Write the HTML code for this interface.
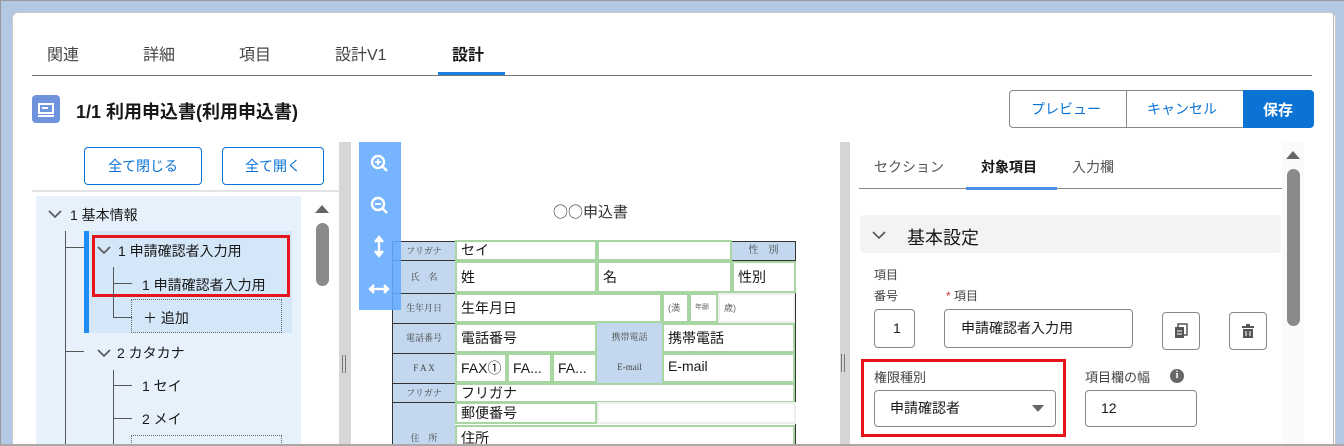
<!DOCTYPE html>
<html style="width:1344px;height:446px;overflow:hidden"><head><meta charset="utf-8"><style>
*{box-sizing:border-box;margin:0;padding:0}
body{width:1344px;height:446px;overflow:hidden;background:#b3c8e4;font-family:"Liberation Sans","Noto Sans CJK JP",sans-serif;color:#181818;position:relative}
.a{position:absolute}
.card{left:12px;top:12px;width:1324px;height:434px;background:#fff;border-radius:6px 6px 0 0;border:1px solid #c9c9c9;border-bottom:none}
.t{position:absolute;white-space:nowrap}
.btn{position:absolute;border:1px solid #0b73d4;border-radius:4px;color:#0b73d4;font-size:14px;text-align:center;background:#fff}
.g{position:absolute;background:#fff;border:2px solid #a8d6a2;font-size:14px;padding-left:4px;white-space:nowrap;overflow:hidden}
.lb{position:absolute;background:#c3d8ef;font-family:"Liberation Serif","Noto Serif CJK SC",serif;font-size:9px;color:#444;text-align:center;white-space:nowrap;border-bottom:1px solid #333}
.hl{position:absolute;background:#555;height:1px}
.vl{position:absolute;background:#555;width:1px}
.inp{position:absolute;border:1px solid #888;border-radius:4px;background:#fff;font-size:14px}
</style></head><body>
<div class="a" style="left:0;top:0;width:1344px;height:1px;background:#999"></div>
<div class="a" style="left:0;top:0;width:1px;height:446px;background:#999"></div>
<div class="a card"></div>
<!-- tabs -->
<div class="t" style="left:47px;top:41px;font-size:16px;color:#444">関連</div>
<div class="t" style="left:143px;top:41px;font-size:16px;color:#444">詳細</div>
<div class="t" style="left:239px;top:41px;font-size:16px;color:#444">項目</div>
<div class="t" style="left:335px;top:41px;font-size:16px;color:#444">設計V1</div>
<div class="t" style="left:452px;top:41px;font-size:16px;font-weight:bold">設計</div>
<div class="a" style="left:32px;top:75px;width:1280px;height:1px;background:#777"></div>
<div class="a" style="left:438px;top:72px;width:67px;height:3px;background:#1b7de0"></div>
<!-- header -->
<div class="a" style="left:32px;top:95px;width:28px;height:28px;background:#6f93dc;border-radius:4px"></div>
<svg class="a" style="left:32px;top:95px" width="28" height="28"><rect x="7" y="9" width="14" height="9" fill="none" stroke="#fff" stroke-width="2"/><line x1="10" y1="13" x2="16" y2="13" stroke="#fff" stroke-width="2"/><line x1="6" y1="21" x2="22" y2="21" stroke="#fff" stroke-width="2"/></svg>
<div class="t" style="left:76px;top:98px;font-size:18px;font-weight:bold">1/1 利用申込書(利用申込書)</div>
<div class="a" style="left:1009px;top:90px;width:235px;height:38px;border:1px solid #888;border-radius:4px 0 0 4px"></div>
<div class="a" style="left:1126px;top:90px;width:1px;height:38px;background:#888"></div>
<div class="t" style="left:1031px;top:99px;font-size:14px;color:#0b73d4">プレビュー</div>
<div class="t" style="left:1147px;top:99px;font-size:14px;color:#0b73d4">キャンセル</div>
<div class="a" style="left:1243px;top:90px;width:71px;height:38px;background:#0b73d4;border-radius:0 4px 4px 0"></div>
<div class="t" style="left:1263px;top:99px;font-size:15px;color:#fff;font-weight:bold">保存</div>
<!-- left -->
<div class="btn" style="left:84px;top:147px;width:118px;height:38px;line-height:36px">全て閉じる</div>
<div class="btn" style="left:222px;top:147px;width:102px;height:38px;line-height:36px">全て開く</div>
<div class="a" style="left:32px;top:190px;width:307px;height:2px;background:#e4e4e4"></div>
<div class="a" style="left:36px;top:196px;width:265px;height:250px;background:#e6f1fb"></div>
<div class="a" style="left:84px;top:231px;width:208px;height:102px;background:#d4e7f8"></div>
<div class="a" style="left:84px;top:231px;width:5px;height:102px;background:#1e8df2"></div>
<div class="a" style="left:92px;top:235px;width:198px;height:62px;border:3px solid #e8141b"></div>
<svg class="a" style="left:47px;top:208px" width="16" height="12"><polyline points="2,3 8,9 14,3" fill="none" stroke="#555" stroke-width="1.6"/></svg>
<div class="t" style="left:70px;top:205px;font-size:14px">1 基本情報</div>
<div class="vl" style="left:65px;top:231px;height:215px"></div>
<div class="hl" style="left:65px;top:247px;width:19px"></div>
<svg class="a" style="left:96px;top:244px" width="16" height="12"><polyline points="2,3 8,9 14,3" fill="none" stroke="#555" stroke-width="1.6"/></svg>
<div class="t" style="left:118px;top:241px;font-size:14px">1 申請確認者入力用</div>
<div class="vl" style="left:113px;top:267px;height:51px"></div>
<div class="hl" style="left:113px;top:283px;width:19px"></div>
<div class="hl" style="left:113px;top:317px;width:19px"></div>
<div class="t" style="left:142px;top:275px;font-size:14px">1 申請確認者入力用</div>
<div class="a" style="left:131px;top:299px;width:151px;height:34px;border:1px dotted #666"></div>
<div class="t" style="left:143px;top:308px;font-size:14px">＋ 追加</div>
<div class="hl" style="left:65px;top:351px;width:19px"></div>
<svg class="a" style="left:96px;top:347px" width="16" height="12"><polyline points="2,3 8,9 14,3" fill="none" stroke="#555" stroke-width="1.6"/></svg>
<div class="t" style="left:117px;top:343px;font-size:14px">2 カタカナ</div>
<div class="vl" style="left:113px;top:370px;height:76px"></div>
<div class="hl" style="left:113px;top:385px;width:19px"></div>
<div class="hl" style="left:113px;top:418px;width:19px"></div>
<div class="t" style="left:142px;top:376px;font-size:14px">1 セイ</div>
<div class="t" style="left:142px;top:409px;font-size:14px">2 メイ</div>
<div class="a" style="left:131px;top:435px;width:151px;height:12px;border:1px dotted #666;border-bottom:none"></div>
<svg class="a" style="left:314px;top:202px" width="16" height="12"><polygon points="1,11 8,3 15,11" fill="#666"/></svg>
<div class="a" style="left:316px;top:223px;width:13px;height:63px;background:#8a8a8a;border-radius:7px"></div>
<!-- splitter -->
<div class="a" style="left:339px;top:142px;width:12px;height:304px;background:#d6d6d6"></div>
<div class="a" style="left:342px;top:355px;width:1px;height:18px;background:#777"></div>
<div class="a" style="left:345px;top:355px;width:1px;height:18px;background:#777"></div>
<!-- middle -->
<div class="a" style="left:351px;top:142px;width:489px;height:304px;background:#fff"></div>
<div class="t" style="left:553px;top:201px;font-size:15px;color:#333;font-family:'Noto Sans CJK JP',sans-serif">○○申込書</div>
<div class="a" style="left:392px;top:241px;width:404px;height:205px;border-left:1px solid #333;border-top:1px solid #333;border-right:1px solid #333"></div>
<div class="lb" style="left:393px;top:242px;width:62px;height:19px;line-height:18px">フリガナ</div>
<div class="lb" style="left:393px;top:261px;width:62px;height:33px;line-height:32px">氏　名</div>
<div class="lb" style="left:393px;top:294px;width:62px;height:30px;line-height:29px">生年月日</div>
<div class="lb" style="left:393px;top:324px;width:62px;height:30px;line-height:29px">電話番号</div>
<div class="lb" style="left:393px;top:354px;width:62px;height:30px;line-height:29px">F A X</div>
<div class="lb" style="left:393px;top:384px;width:62px;height:19px;line-height:18px">フリガナ</div>
<div class="lb" style="left:393px;top:403px;width:62px;height:43px;line-height:70px;border:none">住　所</div>
<div class="g" style="left:455px;top:240px;width:142px;height:21px;line-height:17px">セイ</div>
<div class="g" style="left:597px;top:240px;width:135px;height:21px"></div>
<div class="lb" style="left:732px;top:242px;width:63px;height:19px;line-height:18px;font-size:10px">性　別</div>
<div class="g" style="left:455px;top:261px;width:142px;height:32px;line-height:28px">姓</div>
<div class="g" style="left:597px;top:261px;width:135px;height:32px;line-height:28px">名</div>
<div class="g" style="left:732px;top:261px;width:64px;height:32px;line-height:28px">性別</div>
<div class="g" style="left:455px;top:293px;width:207px;height:30px;line-height:26px">生年月日</div>
<div class="g" style="left:662px;top:293px;width:27px;height:30px;line-height:26px;font-size:9px;color:#666">(満</div>
<div class="g" style="left:689px;top:293px;width:29px;height:30px;line-height:26px;font-size:7px;color:#666">年齢</div>
<div class="g" style="left:718px;top:293px;width:77px;height:30px;line-height:26px;font-size:9px;color:#666;border-color:#eee">歳)</div>
<div class="g" style="left:455px;top:323px;width:142px;height:30px;line-height:26px">電話番号</div>
<div class="lb" style="left:597px;top:323px;width:65px;height:30px;line-height:29px;border:none">携帯電話</div>
<div class="g" style="left:662px;top:323px;width:133px;height:30px;line-height:26px">携帯電話</div>
<div class="g" style="left:455px;top:353px;width:52px;height:30px;line-height:26px">FAX①</div>
<div class="g" style="left:507px;top:353px;width:45px;height:30px;line-height:26px">FA...</div>
<div class="g" style="left:552px;top:353px;width:45px;height:30px;line-height:26px">FA...</div>
<div class="lb" style="left:597px;top:353px;width:65px;height:30px;line-height:29px;border:none">E-mail</div>
<div class="g" style="left:662px;top:353px;width:133px;height:30px;line-height:22px">E-mail</div>
<div class="g" style="left:455px;top:383px;width:340px;height:20px;line-height:16px">フリガナ</div>
<div class="g" style="left:455px;top:402px;width:142px;height:22px;line-height:18px">郵便番号</div>
<div class="g" style="left:597px;top:402px;width:199px;height:22px;border-color:#eee"></div>
<div class="g" style="left:455px;top:425px;width:340px;height:22px;line-height:22px">住所</div>
<!-- zoom toolbar -->
<div class="a" style="left:359px;top:142px;width:42px;height:168px;background:rgba(100,170,255,0.88)"></div>
<svg class="a" style="left:359px;top:142px" width="42" height="168" fill="none" stroke="#fff" stroke-width="2.4">
<circle cx="19" cy="20" r="6"/><line x1="23" y1="24" x2="28" y2="29"/><line x1="16" y1="20" x2="22" y2="20" stroke-width="1.8"/><line x1="19" y1="17" x2="19" y2="23" stroke-width="1.8"/>
<circle cx="19" cy="62" r="6"/><line x1="23" y1="66" x2="28" y2="71"/><line x1="16" y1="62" x2="22" y2="62" stroke-width="1.8"/>
<line x1="20" y1="97" x2="20" y2="112"/><polyline points="16,100 20,95 24,100" fill="#fff"/><polyline points="16,109 20,114 24,109" fill="#fff"/>
<line x1="12" y1="147" x2="28" y2="147"/><polyline points="15,143 11,147 15,151" fill="#fff"/><polyline points="25,143 29,147 25,151" fill="#fff"/>
</svg>
<!-- right splitter -->
<div class="a" style="left:840px;top:142px;width:10px;height:304px;background:#d6d6d6"></div>
<div class="a" style="left:841px;top:354px;width:1px;height:18px;background:#777"></div>
<div class="a" style="left:844px;top:354px;width:1px;height:18px;background:#777"></div>
<!-- right panel -->
<div class="t" style="left:874px;top:157px;font-size:14px;color:#555">セクション</div>
<div class="t" style="left:981px;top:157px;font-size:14px;font-weight:bold">対象項目</div>
<div class="t" style="left:1072px;top:157px;font-size:14px;color:#555">入力欄</div>
<div class="a" style="left:859px;top:188px;width:423px;height:1px;background:#888"></div>
<div class="a" style="left:966px;top:187px;width:91px;height:3px;background:#4a90e6"></div>
<div class="a" style="left:860px;top:215px;width:421px;height:38px;background:#f3f3f3;border-radius:4px"></div>
<svg class="a" style="left:871px;top:229px" width="16" height="12"><polyline points="2,3 8,9 14,3" fill="none" stroke="#555" stroke-width="1.6"/></svg>
<div class="t" style="left:907px;top:224px;font-size:18px">基本設定</div>
<div class="t" style="left:874px;top:266px;font-size:12px;color:#444">項目</div>
<div class="t" style="left:874px;top:287px;font-size:12px;color:#444">番号</div>
<div class="t" style="left:946px;top:287px;font-size:12px;color:#444"><span style="color:#c23934">*</span> 項目</div>
<div class="inp" style="left:874px;top:309px;width:41px;height:39px;line-height:37px;padding-left:18px">1</div>
<div class="inp" style="left:944px;top:309px;width:189px;height:39px;line-height:37px;padding-left:16px">申請確認者入力用</div>
<div class="inp" style="left:1162px;top:312px;width:38px;height:38px"></div>
<svg class="a" style="left:1162px;top:312px" width="38" height="38"><rect x="16" y="12" width="9" height="11" fill="none" stroke="#555" stroke-width="1.5"/><rect x="13" y="15" width="9" height="11" fill="#555"/><line x1="15" y1="19" x2="20" y2="19" stroke="#fff"/><line x1="15" y1="22" x2="20" y2="22" stroke="#fff"/></svg>
<div class="inp" style="left:1229px;top:312px;width:38px;height:38px"></div>
<svg class="a" style="left:1229px;top:312px" width="38" height="38"><rect x="13" y="14" width="12" height="2" fill="#555"/><rect x="17" y="12" width="4" height="2" fill="#555"/><rect x="14" y="17" width="10" height="9" fill="#555"/><line x1="17" y1="19" x2="17" y2="24" stroke="#fff"/><line x1="21" y1="19" x2="21" y2="24" stroke="#fff"/></svg>
<div class="a" style="left:861px;top:359px;width:205px;height:78px;border:3px solid #e8141b"></div>
<div class="t" style="left:874px;top:367px;font-size:13px;color:#444">権限種別</div>
<div class="inp" style="left:874px;top:390px;width:182px;height:37px;line-height:35px;padding-left:15px">申請確認者</div>
<svg class="a" style="left:1031px;top:404px" width="14" height="9"><polygon points="1,1 13,1 7,8" fill="#666"/></svg>
<div class="t" style="left:1085px;top:367px;font-size:13px;color:#444">項目欄の幅</div>
<div class="a" style="left:1170px;top:369px;width:14px;height:14px;border-radius:7px;background:#666;color:#fff;font-size:10px;font-weight:bold;text-align:center;line-height:14px;font-family:'Liberation Serif',serif">i</div>
<div class="inp" style="left:1085px;top:390px;width:112px;height:37px;line-height:35px;padding-left:15px">12</div>
<div class="a" style="left:1282px;top:142px;width:22px;height:304px;background:#fafafa"></div>
<svg class="a" style="left:1285px;top:148px" width="16" height="12"><polygon points="1,11 8,3 15,11" fill="#666"/></svg>
<div class="a" style="left:1287px;top:169px;width:13px;height:157px;background:#8a8a8a;border-radius:7px"></div>
<div class="a" style="left:1333px;top:12px;width:1px;height:434px;background:#bbb"></div>
<div class="a" style="left:0;top:444px;width:1344px;height:2px;background:#aaa"></div>
</body></html>
